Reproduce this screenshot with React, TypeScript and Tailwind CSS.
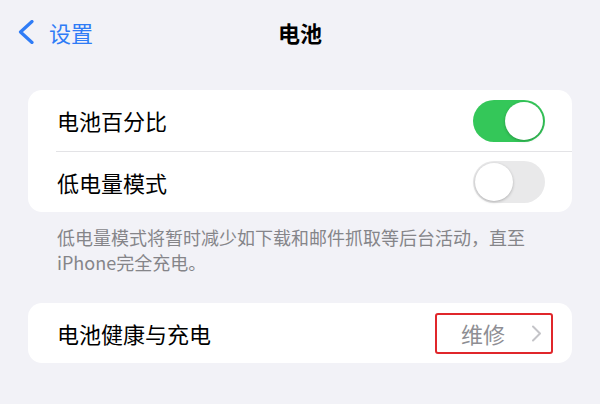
import React from "react";

const font = { fontFamily: '"Noto Sans CJK SC", "Noto Sans", sans-serif' };

function Toggle({ on }: { on: boolean }) {
  return (
    <div
      className={
        "w-[72px] h-[42px] rounded-full flex items-center p-[2px] " +
        (on ? "bg-[#34c759] justify-end" : "bg-[#e9e9ea] justify-start")
      }
    >
      <div className="w-[38px] h-[38px] rounded-full bg-white shadow-[0_1px_3px_rgba(0,0,0,0.25)]" />
    </div>
  );
}

export default function App() {
  return (
    <div
      className="w-[600px] h-[404px] bg-[#f2f2f7] overflow-hidden"
      style={font}
    >
      <div className="h-[64px] grid grid-cols-3 items-center">
        <div className="flex items-center pl-[18px] gap-[15px]">
          <svg width="16" height="24" viewBox="0 0 16 24" fill="none">
            <path
              d="M14 1.5 L2.5 12 L14 22.5"
              stroke="#2f7cf6"
              strokeWidth="3.2"
              strokeLinecap="round"
              strokeLinejoin="round"
            />
          </svg>
          <span className="text-[22px] leading-none text-[#2f7cf6]">设置</span>
        </div>
        <div className="text-center text-[22px] leading-none font-semibold text-black">
          电池
        </div>
        <div />
      </div>

      <div className="mx-[28px] mt-[26px] rounded-[14px] bg-white">
        <div className="h-[61px] flex items-center justify-between pl-[29px] pr-[27px]">
          <span className="text-[22px] text-black">电池百分比</span>
          <Toggle on={true} />
        </div>
        <div className="ml-[28px] h-px bg-[#e3e3e6]" />
        <div className="h-[60px] flex items-center justify-between pl-[29px] pr-[27px]">
          <span className="text-[22px] text-black">低电量模式</span>
          <Toggle on={false} />
        </div>
      </div>

      <div className="ml-[57px] mr-[40px] mt-[13px] text-[18px] leading-[25px] text-[#858589]">
        低电量模式将暂时减少如下载和邮件抓取等后台活动，直至
        <br />
        iPhone完全充电。
      </div>

      <div className="mx-[28px] mt-[28px] rounded-[14px] bg-white h-[60px] flex items-center justify-between pl-[29px] pr-[19px]">
        <span className="text-[22px] text-black">电池健康与充电</span>
        <div className="w-[118px] h-[41px] border-2 border-[#e0262b] rounded-[3px] flex items-center pl-[24px] pr-[9px] justify-between">
          <span className="text-[22px] leading-none text-[#8e8e93]">维修</span>
          <svg width="11" height="17" viewBox="0 0 11 17" fill="none">
            <path
              d="M2 1.5 L9 8.5 L2 15.5"
              stroke="#c4c4c8"
              strokeWidth="2"
              strokeLinecap="round"
              strokeLinejoin="round"
            />
          </svg>
        </div>
      </div>
    </div>
  );
}
